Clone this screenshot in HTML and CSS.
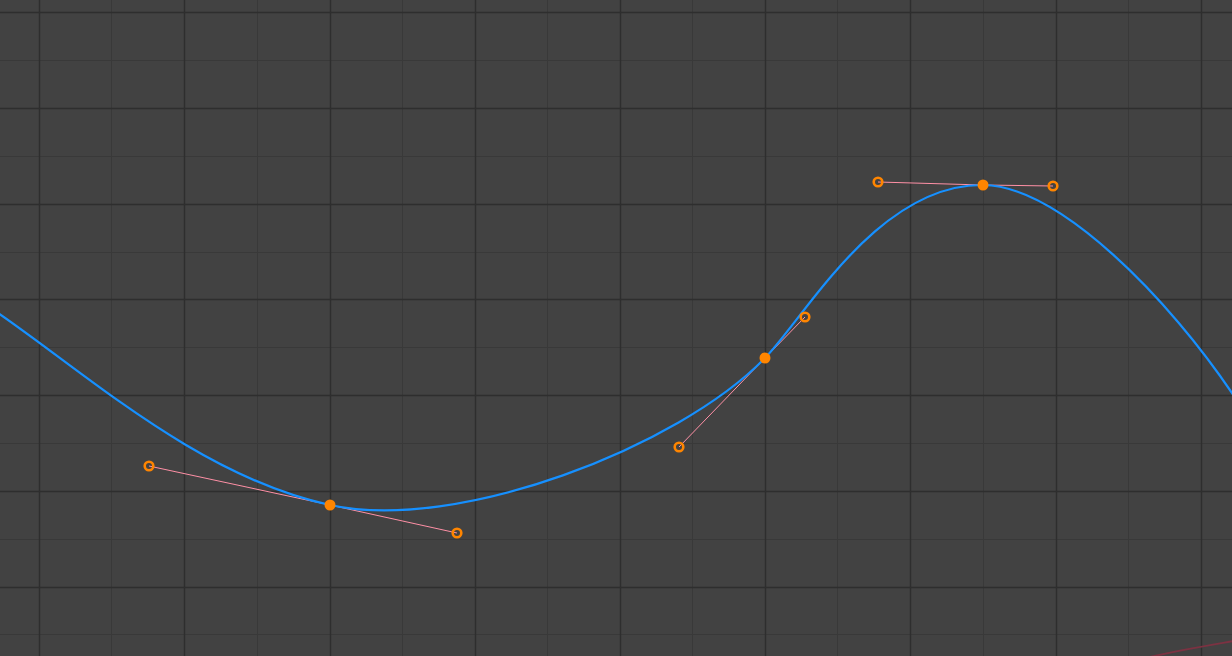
FILE: index.html
```html
<!DOCTYPE html>
<html lang="en">
  <head>
    <meta charset="UTF-8" />
    <meta name="viewport" content="width=device-width, initial-scale=1.0" />
    <title>Graph Editor</title>
    <link rel="stylesheet" href="styles.css">
  </head>
  <body>
    <section class="graph">
      <svg class="canvas" width="1232" height="656" viewBox="0 0 1232 656">
        <!-- minor grid -->
        <g class="grid-minor">
          <line x1="111.5" y1="0" x2="111.5" y2="656" />
          <line x1="257.5" y1="0" x2="257.5" y2="656" />
          <line x1="402.5" y1="0" x2="402.5" y2="656" />
          <line x1="547.5" y1="0" x2="547.5" y2="656" />
          <line x1="692.5" y1="0" x2="692.5" y2="656" />
          <line x1="837.5" y1="0" x2="837.5" y2="656" />
          <line x1="983.5" y1="0" x2="983.5" y2="656" />
          <line x1="1128.5" y1="0" x2="1128.5" y2="656" />
          <line x1="0" y1="60.5" x2="1232" y2="60.5" />
          <line x1="0" y1="156.5" x2="1232" y2="156.5" />
          <line x1="0" y1="252.5" x2="1232" y2="252.5" />
          <line x1="0" y1="347.5" x2="1232" y2="347.5" />
          <line x1="0" y1="443.5" x2="1232" y2="443.5" />
          <line x1="0" y1="539.5" x2="1232" y2="539.5" />
          <line x1="0" y1="634.5" x2="1232" y2="634.5" />
        </g>
        <!-- major grid -->
        <g class="grid-major">
          <line x1="39.5" y1="0" x2="39.5" y2="656" />
          <line x1="184.5" y1="0" x2="184.5" y2="656" />
          <line x1="330.5" y1="0" x2="330.5" y2="656" />
          <line x1="475.5" y1="0" x2="475.5" y2="656" />
          <line x1="620.5" y1="0" x2="620.5" y2="656" />
          <line x1="765.5" y1="0" x2="765.5" y2="656" />
          <line x1="910.5" y1="0" x2="910.5" y2="656" />
          <line x1="1056.5" y1="0" x2="1056.5" y2="656" />
          <line x1="1201.5" y1="0" x2="1201.5" y2="656" />
          <line x1="0" y1="12.5" x2="1232" y2="12.5" />
          <line x1="0" y1="108.5" x2="1232" y2="108.5" />
          <line x1="0" y1="204.5" x2="1232" y2="204.5" />
          <line x1="0" y1="299.5" x2="1232" y2="299.5" />
          <line x1="0" y1="395.5" x2="1232" y2="395.5" />
          <line x1="0" y1="491.5" x2="1232" y2="491.5" />
          <line x1="0" y1="587.5" x2="1232" y2="587.5" />
        </g>

        <!-- second channel, mostly off view -->
        <path class="fcurve-other" d="M1150,657 C1180,650 1205,646 1234,641" />

        <!-- handle lines -->
        <g class="handle-line">
          <line x1="149" y1="466" x2="330" y2="505" />
          <line x1="330" y1="505" x2="457" y2="533" />
          <line x1="679" y1="447" x2="765" y2="358" />
          <line x1="765" y1="358" x2="805" y2="317" />
          <line x1="878" y1="182" x2="983" y2="185" />
          <line x1="983" y1="185" x2="1053" y2="186" />
        </g>

        <!-- active fcurve -->
        <path class="fcurve" d="M-2,313 C88,375 200,477 330,505
                                C457,533 679,447 765,358
                                C805,317 878,184 983,185
                                C1060,186 1170,300 1234,396" />

        <!-- handles -->
        <g class="handle">
          <circle cx="149" cy="466" r="4.3" />
          <circle cx="457" cy="533" r="4.3" />
          <circle cx="679" cy="447" r="4.3" />
          <circle cx="805" cy="317" r="4.3" />
          <circle cx="878" cy="182" r="4.3" />
          <circle cx="1053" cy="186" r="4.3" />
        </g>

        <!-- keyframes -->
        <g class="key">
          <circle cx="330" cy="505" r="5.5" />
          <circle cx="765" cy="358" r="5.5" />
          <circle cx="983" cy="185" r="5.5" />
        </g>
      </svg>
    </section>
  </body>
</html>
```

FILE: styles.css
```css
html, body {
  margin: 0;
  padding: 0;
  background-color: #424242;
  overflow: hidden;
}

.graph {
  width: 1232px;
  height: 656px;
}

.canvas {
  display: block;
}

.grid-minor line {
  stroke: #393939;
  stroke-width: 1;
}

.grid-major line {
  stroke: #2e2e2e;
  stroke-width: 1.4;
}

.fcurve {
  fill: none;
  stroke: #1690ff;
  stroke-width: 2.2;
}

.fcurve-other {
  fill: none;
  stroke: #7c3242;
  stroke-width: 2;
}

.handle-line line {
  stroke: #ff90a6;
  stroke-width: 1;
}

.handle circle {
  fill: none;
  stroke: #ff8500;
  stroke-width: 2.6;
}

.key circle {
  fill: #ff8500;
}
```
